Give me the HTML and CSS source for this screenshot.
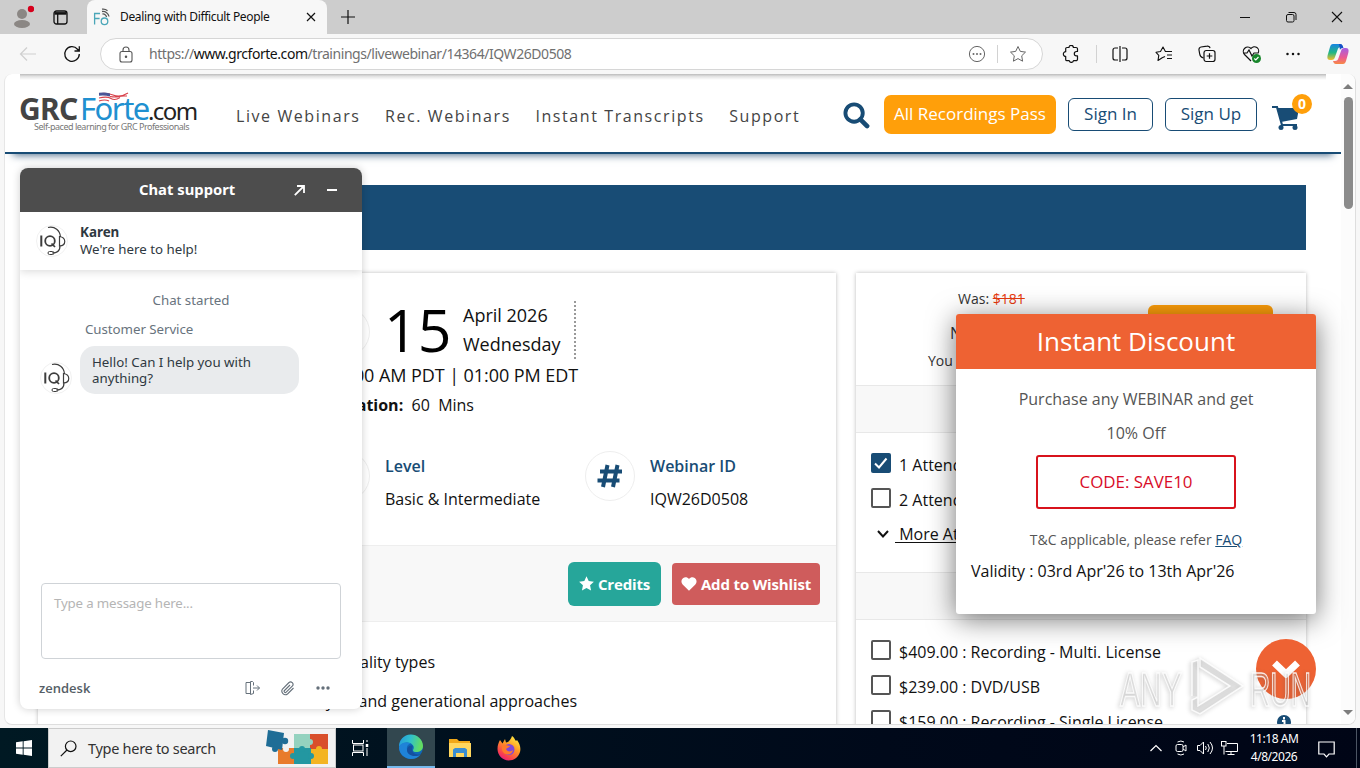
FILE: index.html
```html
<!DOCTYPE html>
<html lang="en">
<head>
<meta charset="utf-8">
<title>Dealing with Difficult People</title>
<link rel="stylesheet" href="styles.css">
</head>
<body>
<div class="desktop">
  <div class="titlebar">
    <svg class="profile" width="22" height="24" viewBox="0 0 22 24"><circle cx="10" cy="9" r="5" fill="#8b8784"/><ellipse cx="10" cy="19" rx="8" ry="4" fill="#8b8784"/><circle cx="19" cy="4" r="3.2" fill="#d6001c"/></svg>
    <svg class="tabs-menu" width="15" height="15" viewBox="0 0 15 15" fill="none" stroke="#111" stroke-width="1.3"><rect x="1" y="1" width="13" height="13" rx="2.5"/><path d="M1.5 3.4h12" stroke-width="2.6"/><path d="M4.7 4v10"/></svg>
    <div class="tab">
      <svg width="17" height="18" viewBox="0 0 17 18" fill="none" stroke="#4aa6b8" stroke-width="1.3"><path d="M1.6 16.500V5.500H7M1.600 10.500h5"/><circle cx="11.500" cy="13.300" r="3.300"/><path d="M9.500 6a3.500 3.500 0 0 1 4 3M9 3.500c3.500-.5 6.500 2 7 5M9 1.200c2-.3 4 .2 5.500 1.500" stroke="#555"/></svg>
      <span class="tab-title">Dealing with Difficult People</span>
      <svg class="tab-close" width="10" height="10" viewBox="0 0 10 10" stroke="#111" stroke-width="1.2"><path d="M1 1l8 8M9 1L1 9"/></svg>
    </div>
    <svg class="newtab" width="14" height="14" viewBox="0 0 14 14" stroke="#111" stroke-width="1.2"><path d="M7 0v14M0 7h14"/></svg>
    <div class="window-controls">
      <svg width="12" height="12" viewBox="0 0 12 12" stroke="#111"><path d="M1 6.500h10"/></svg>
      <svg width="12" height="12" viewBox="0 0 12 12" stroke="#111" fill="none"><rect x="1.500" y="3.500" width="7.500" height="7.500" rx="1.500"/><path d="M3.500 1.500H9A2 2 0 0 1 11 3.500V9"/></svg>
      <svg width="12" height="12" viewBox="0 0 12 12" stroke="#111" stroke-width="1.100"><path d="M1 1l10 10M11 1L1 11"/></svg>
    </div>
  </div>

  <div class="toolbar">
    <svg class="back" width="18" height="16" viewBox="0 0 18 16" fill="none" stroke="#cfcfcf" stroke-width="1.200"><path d="M17 8H2M8 1.500L1.500 8 8 14.500"/></svg>
    <svg class="reload" width="18" height="18" viewBox="0 0 18 18" fill="none" stroke="#111" stroke-width="1.300"><path d="M16.300 9A7.300 7.300 0 1 1 14.500 4.200L16 5.800M16.300 1.200V6H11.500"/></svg>
    <div class="address">
      <svg width="14" height="17" viewBox="0 0 14 17" fill="none" stroke="#555" stroke-width="1.100"><rect x="1" y="5.500" width="12" height="10.500" rx="2"/><path d="M4 5.500V4a3 3 0 0 1 6 0v1.500"/><circle cx="7" cy="10.800" r=".7" fill="#555"/></svg>
      <span class="url">https://<b>www.grcforte.com</b>/trainings/livewebinar/14364/IQW26D0508</span>
      <svg class="addr-more" width="18" height="18" viewBox="0 0 18 18" fill="none" stroke="#666"><circle cx="9" cy="9" r="7.600"/><g fill="#666" stroke="none"><circle cx="5.500" cy="9" r="1"/><circle cx="9" cy="9" r="1"/><circle cx="12.500" cy="9" r="1"/></g></svg>
      <i class="divider"></i>
      <svg width="18" height="18" viewBox="0 0 18 18" fill="none" stroke="#666" stroke-linejoin="round"><path d="M9 1.500l2.300 4.900 5.200.7-3.800 3.700.9 5.400L9 13.600l-4.600 2.600.9-5.400L1.500 7.100l5.200-.7z"/></svg>
    </div>
    <svg class="ext" width="18" height="18" viewBox="0 0 18 18" fill="none" stroke="#111" stroke-width="1.200" stroke-linejoin="round"><path d="M5 2.500h2a2.200 2.200 0 0 1 4.400 0H14a1.500 1.500 0 0 1 1.500 1.500V6.500h-1a2.100 2.100 0 0 0 0 4.400h1v3.300a1.500 1.500 0 0 1-1.500 1.500h-2.500a2.200 2.200 0 0 1-4.300 0H5a1.300 1.300 0 0 1-1.300-1.300v-3a2.200 2.200 0 0 1 0-4.700V3.800A1.300 1.300 0 0 1 5 2.500z"/></svg>
    <i class="divider tool-divider"></i>
    <div class="tools">
      <svg width="18" height="18" viewBox="0 0 18 18" fill="none" stroke="#111" stroke-width="1.200"><path d="M7 3H4a2 2 0 0 0-2 2v8a2 2 0 0 0 2 2h3M11 3h3a2 2 0 0 1 2 2v8a2 2 0 0 1-2 2h-3M9 1v16"/></svg>
      <svg width="18" height="18" viewBox="0 0 18 18" fill="none" stroke="#111" stroke-width="1.100" stroke-linejoin="round"><path d="M10 11.500l-2.800 1.300L3 15.500l.8-5.200L1 7.300l4.500-.8L8 2l2.400 4.500H17M12 10h5M12 13.500h5"/></svg>
      <svg width="18" height="18" viewBox="0 0 18 18" fill="none" stroke="#111" stroke-width="1.200"><path d="M5.500 13C3 12.500 2 11 1.700 9L1 5a2.500 2.500 0 0 1 2-3l6-.9a2.500 2.500 0 0 1 3 2"/><rect x="6" y="5.500" width="11" height="11" rx="2.200"/><path d="M11.500 8.200v5.600M8.700 11h5.600"/></svg>
      <svg class="health" width="20" height="19" viewBox="0 0 20 19" fill="none" stroke="#111" stroke-width="1.200"><path d="M9 16L2.500 9.500A4.200 4.200 0 0 1 9 3.500a4.200 4.200 0 0 1 6.800 5M1 8h4l2-3 3 6 2-3h4"/><circle cx="14.500" cy="13.500" r="4.500" fill="#18862b" stroke="none"/><path d="M12.300 13.500l1.500 1.500 2.700-3" stroke="#fff"/></svg>
      <svg width="16" height="16" viewBox="0 0 16 16" fill="#111"><circle cx="2.500" cy="8" r="1.250"/><circle cx="8" cy="8" r="1.250"/><circle cx="13.500" cy="8" r="1.250"/></svg>
      <svg width="22" height="22" viewBox="0 0 22 22"><defs><linearGradient id="cp1" x1="0" y1="0" x2="0" y2="1"><stop offset="0" stop-color="#1684e3"/><stop offset=".55" stop-color="#22b783"/><stop offset="1" stop-color="#f6bd29"/></linearGradient><linearGradient id="cp2" x1="0" y1="0" x2="0" y2="1"><stop offset="0" stop-color="#a45fe4"/><stop offset=".6" stop-color="#ec5b92"/><stop offset="1" stop-color="#f78944"/></linearGradient></defs><path d="M6 1h7c2 0 2.500 1.500 3 3h-2c-2 0-3 1-3.500 3L8 14c-.5 2-1.500 3-3.500 3H3C0 17 0 14 1 11l2-7c.6-2 1.500-3 3-3z" fill="url(#cp1)"/><path d="M16 21H9c-2 0-2.500-1.500-3-3h2c2 0 3-1 3.500-3L14 8c.5-2 1.500-3 3.500-3H19c3 0 3 3 2 6l-2 7c-.6 2-1.500 3-3 3z" fill="url(#cp2)"/><path d="M12 1h1c2 0 2.500 1.500 3.500 4-2 0-3 .5-3.500 2z" fill="#1750c7"/></svg>
    </div>
  </div>

  <div class="viewport">
    <div class="page">
      <header class="site-header">
        <div class="logo">
          <div class="logo-name"><span class="logo-grc">GRC</span><span class="logo-forte">Forte</span><span class="logo-com">.com</span></div>
          <div class="logo-tag">Self-paced learning for GRC Professionals</div>
          <svg class="flag" width="32" height="10" viewBox="0 0 32 10" fill="none"><path d="M1 2q7-2 14 1t15-2M12 4.500q6 1 9 0t8-.5M1 6q8-2 12 .5t9-1M1 9q6-2 10 0" stroke="#d8414a" stroke-width="1.100"/><path d="M1 .8q6-1 11 .8v3q-5-1.500-11-.8z" fill="#4a5596"/></svg>
        </div>
        <nav class="menu"><a>Live Webinars</a><a>Rec. Webinars</a><a>Instant Transcripts</a><a>Support</a></nav>
        <svg class="search" width="27" height="27" viewBox="0 0 28 28" fill="none" stroke="#184c75"><circle cx="11.500" cy="11.500" r="9" stroke-width="4"/><path d="M18 18l7 7" stroke-width="4.800" stroke-linecap="round"/></svg>
        <a class="pass">All Recordings Pass</a>
        <a class="sign sign-in">Sign In</a>
        <a class="sign sign-up">Sign Up</a>
        <div class="cart">
          <svg width="30" height="26" viewBox="0 0 30 26"><path d="M1 2h5l5 18h15" fill="none" stroke="#184c75" stroke-width="2.200"/><path d="M6 3h22l-2 11-16 3z" fill="#184c75"/><circle cx="10" cy="22.500" r="2.500" fill="#184c75"/><circle cx="24" cy="22.500" r="2.500" fill="#184c75"/></svg>
          <span class="cart-count">0</span>
        </div>
      </header>

      <div class="banner"></div>

      <div class="columns">
        <section class="card details">
          <div class="date-row">
            <span class="circle circle-date"></span>
            <span class="day">15</span>
            <div class="month"><div>April 2026</div><div>Wednesday</div></div>
          </div>
          <div class="time">10:00 AM PDT | 01:00 PM EDT</div>
          <div class="duration"><b>Duration:</b>&nbsp; 60&nbsp; Mins</div>
          <div class="facts">
            <div class="fact"><span class="circle"></span><div><div class="fact-name">Level</div><div>Basic &amp; Intermediate</div></div></div>
            <div class="fact"><span class="circle"><svg width="26" height="24" viewBox="0 0 26 24" fill="none" stroke="#184c75" stroke-width="4"><path d="M10.500 1L6 23M20.500 1L16 23M3 7.500h22M.5 16.500h22"/></svg></span><div><div class="fact-name">Webinar ID</div><div>IQW26D0508</div></div></div>
          </div>
          <div class="actions">
            <a class="btn credits"><svg width="15" height="15" viewBox="0 0 24 24" fill="#fff"><path d="M12 .5l3.500 7.600 8.300 1-6.100 5.700 1.600 8.200L12 19l-7.300 4 1.600-8.200L.2 9.100l8.300-1z"/></svg>Credits</a>
            <a class="btn wishlist"><svg width="16" height="14" viewBox="0 0 24 22" fill="#fff"><path d="M12 21.500L2 11.800C-1 8.500-.2 3.500 3 1.500 6.300-.5 10 .8 12 3c2-2.200 5.700-3.500 9-1.500 3.200 2 4 7 1 10.300z"/></svg>Add to Wishlist</a>
          </div>
          <div class="topics"><div class="topic-a">Personality types</div><div class="topic-b">Styles and generational approaches</div></div>
        </section>

        <section class="card prices">
          <div class="price-block">
            <div class="was">Was: <s>$181</s></div>
            <div class="now">Now:</div>
            <div class="save">You Save:</div>
            <span class="buy"></span>
          </div>
          <div class="strip"></div>
          <div class="options live">
            <div class="option"><span class="check checked"><svg width="20" height="20" viewBox="0 0 20 20" fill="none" stroke="#fff" stroke-width="2"><path d="M4 10.500l4 4L15.500 5.500"/></svg></span><span>1 Attendee</span></div>
            <div class="option"><span class="check"></span><span>2 Attendees</span></div>
            <div class="option more"><svg width="12" height="8" viewBox="0 0 12 8" fill="none" stroke="#111" stroke-width="2"><path d="M1 1l5 5.500L11 1"/></svg><u>&nbsp;More Attendees</u></div>
          </div>
          <div class="strip"></div>
          <div class="options recorded">
            <div class="option"><span class="check"></span><span>$409.00 : Recording - Multi. License</span></div>
            <div class="option"><span class="check"></span><span>$239.00 : DVD/USB</span></div>
            <div class="option"><span class="check"></span><span>$159.00 : Recording - Single License</span><svg class="info" width="14" height="14" viewBox="0 0 14 14"><circle cx="7" cy="7" r="7" fill="#184c75"/><path d="M7 2v2.500M5 6h2.500v5M5 11h4" stroke="#fff" stroke-width="2" fill="none"/></svg></div>
          </div>
        </section>
      </div>
    </div>
    <div class="scrollbar"><i class="arrow-up"></i><i class="thumb"></i><i class="arrow-down"></i></div>
  </div>

  <div class="taskbar">
    <div class="start"><svg width="16" height="16" viewBox="0 0 16 16" fill="#fff"><path d="M0 2.200L6.700 1.300V7.500H0zM7.600 1.200L16 0v7.500H7.600zM0 8.400h6.700v6.300L0 13.800zM7.600 8.400H16V16l-8.400-1.200z"/></svg></div>
    <div class="searchbox">
      <svg width="17" height="17" viewBox="0 0 17 17" fill="none" stroke="#111" stroke-width="1.200"><circle cx="10.700" cy="6.300" r="5.300"/><path d="M7 10L.8 16.200"/></svg>
      <span>Type here to search</span>
      <svg class="puzzle" width="64" height="36" viewBox="0 0 64 36"><path d="M28 4h16v16H28z" fill="#94d2bf"/><path d="M44 4h18v16H44z" fill="#d94f2b"/><path d="M12 18h16v16H12z" fill="#e87b2c"/><path d="M28 18h17v16H28z" fill="#2397a1"/><path d="M45 19h17v15H45z" fill="#f3b422"/><circle cx="44" cy="12" r="3" fill="#94d2bf"/><circle cx="36" cy="19" r="3" fill="#2397a1"/><circle cx="53" cy="19" r="3" fill="#f3b422"/><circle cx="27" cy="26" r="3" fill="#2397a1"/><circle cx="45" cy="26" r="3" fill="#2397a1"/><circle cx="20" cy="19" r="3" fill="#f2f2f2"/><path d="M2 0l16 3-2 17-16-4z" fill="#1f6d96"/><circle cx="19" cy="11" r="3.200" fill="#1f6d96"/><circle cx="9" cy="19" r="3" fill="#1f6d96"/></svg>
    </div>
    <div class="apps">
      <div class="app"><svg width="17" height="16" viewBox="0 0 17 16" fill="none" stroke="#fff"><path d="M.5 0v3.500h11V0M.5 16v-3.500h11V16M15 0v2M15 8v8"/><rect x="1.500" y="5" width="9.500" height="6"/><path d="M15 4v3" stroke-width="2.500"/></svg></div>
      <div class="app active"><svg width="26" height="26" viewBox="0 0 26 26"><defs><linearGradient id="ed" x1="0" y1="0" x2="1" y2=".2"><stop offset="0" stop-color="#2497dc"/><stop offset=".5" stop-color="#2fc0cd"/><stop offset="1" stop-color="#63dc61"/></linearGradient></defs><circle cx="13" cy="13" r="12" fill="#0f68b8"/><path d="M1 13a12 12 0 0 1 24-1c0 4-3 6-7 6-3 0-3.500-1.500-2.500-3C17 12 13 8 8.500 8.500 5 9 2 10.500 1 13z" fill="url(#ed)"/><path d="M9 16c-.5-4 1-6 4-6.500-5-2.500-11-.5-12 4C1 20 7 25 13 25c4 0 7-1.500 9-4-7 2-12-.5-13-5z" fill="#1f83d8"/><path d="M9 16c0 5 7 8 14 4.500-5 .5-8.500-1-9-5 0-2 1-2.500.5-4-3-.5-5.500 1.500-5.500 4.500z" fill="#1450a0"/></svg></div>
      <div class="app"><svg width="22" height="20" viewBox="0 0 22 20"><path d="M0 1h8l2 2h11v16H0z" fill="#f0a818"/><path d="M0 5h22v14H0z" fill="#ffd75e"/><path d="M4 19v-7.500l2-1.500h10l2 1.500V19h-3v-4H7v4z" fill="#3a8ed2"/></svg></div>
      <div class="app"><svg width="24" height="25" viewBox="0 0 24 25"><defs><linearGradient id="ff" x1=".8" y1="0" x2=".2" y2="1"><stop offset="0" stop-color="#fff044"/><stop offset=".4" stop-color="#ff9a24"/><stop offset=".8" stop-color="#f83c50"/><stop offset="1" stop-color="#e5178b"/></linearGradient></defs><path d="M3 4l2.500 3.500L8 3l1 3.500C12 6 14 3 15 0c2 1 3 4 4 5l1-1c3 4 4 8 3 12-1.500 5-6 8.500-11.500 8.500S.5 19.500.5 13C.5 9 1.500 7 3 4z" fill="url(#ff)"/><circle cx="12" cy="13.500" r="5.500" fill="#8048d8"/><path d="M5 9c4-1 6 1 8 1-1 2-3 1.500-4 3 1 3 5 3 7 1-1 6-9 6-11 0z" fill="#ff7b2a"/></svg></div>
    </div>
    <div class="tray">
      <svg class="caret" width="12" height="8" viewBox="0 0 12 8" fill="none" stroke="#fff" stroke-width="1.200"><path d="M.5 7L6 1.500 11.500 7"/></svg>
      <svg class="cam" width="12" height="16" viewBox="0 0 12 16" fill="none" stroke="#fff"><rect x="1" y="4.500" width="7" height="7" rx="1.500"/><path d="M8 7l3-2v6L8 9M2.500 2q3.500-2 6.500 0M2.500 14q3.500 2 6.500 0"/></svg>
      <svg class="vol" width="17" height="14" viewBox="0 0 17 14" fill="none" stroke="#fff"><path d="M.5 4.500H3L6.500 1v12L3 9.500H.5zM8.500 5q1.500 2 0 4M10.800 3q3 4 0 8M13 1q5 6 0 12"/></svg>
      <svg class="net" width="17" height="14" viewBox="0 0 17 14" fill="none" stroke="#fff"><path d="M6 2.500h10.500v8H4.500M10 10.500v3M6.500 13.500h7M3 5v8.500"/><rect x=".5" y=".5" width="4.500" height="4.500"/></svg>
      <div class="clock"><div>11:18 AM</div><div>4/8/2026</div></div>
      <svg class="notice" width="17" height="17" viewBox="0 0 17 17" fill="none" stroke="#fff" stroke-width="1.200"><path d="M.8 1h15.400v12H11l-2.500 2.800L6 13H.8z"/></svg>
      <i class="peek"></i>
    </div>
  </div>

  <aside class="chat">
    <div class="chat-head"><span>Chat support</span>
      <svg class="popout" width="11" height="11" viewBox="0 0 11 11" fill="none" stroke="#fff" stroke-width="1.800"><path d="M.8 10.200L10 1M3 1h7v7"/></svg>
      <svg class="minimize" width="12" height="4" viewBox="0 0 12 4" stroke="#fff" stroke-width="2"><path d="M1 2h10"/></svg>
    </div>
    <div class="agent">
      <svg class="avatar" width="34" height="34" viewBox="0 0 34 34"><use href="#iq"/></svg>
      <div><b>Karen</b><div>We're here to help!</div></div>
    </div>
    <div class="chat-body">
      <div class="started">Chat started</div>
      <div class="dept">Customer Service</div>
      <div class="message">
        <svg class="avatar" width="34" height="34" viewBox="0 0 34 34"><g id="iq"><circle cx="17" cy="17" r="15.500" fill="#fff" stroke="#f1f1f1"/><g fill="none" stroke="#3d3d3d"><path d="M6.300 11.500v11" stroke-width="2"/><circle cx="15" cy="17" r="4.800" stroke-width="1.800"/><path d="M16.500 19.500l3.500 3.500" stroke-width="1.700"/><path d="M13 3.500c7-1.500 12 3 12.500 9.500M25 21.500c0 6-3 7.500-8 7.500" stroke-width="1.200"/><path d="M24.500 12.500c7 1 7 9 0 9.500z" stroke-width="1.200"/><rect x="13" y="27.500" width="6" height="3" rx="1.500"/></g></g></svg>
        <div class="bubble">Hello! Can I help you with anything?</div>
      </div>
    </div>
    <div class="composer">Type a message here...</div>
    <div class="chat-foot">
      <span class="brand">zendesk</span>
      <svg class="leave" width="16" height="14" viewBox="0 0 16 14" fill="none" stroke="#65707a"><path d="M5 1.500l-4 0v11h4M5.500.5v13L8.500 12.500v-3M5.500.5h2l1 1v3M8 7h6.500M12 4.500L14.500 7 12 9.500"/></svg>
      <svg class="clip" width="15" height="15" viewBox="0 0 15 15" fill="none" stroke="#65707a" stroke-width="1.100"><path d="M10 4L4.500 9.500a1.200 1.200 0 0 0 1.700 1.700L12.500 5a2.500 2.500 0 0 0-3.500-3.500L2.500 8a3.600 3.600 0 0 0 5 5L13.500 7"/></svg>
      <svg class="dots" width="14" height="6" viewBox="0 0 14 6" fill="#65707a"><circle cx="2" cy="3" r="1.700"/><circle cx="7" cy="3" r="1.700"/><circle cx="12" cy="3" r="1.700"/></svg>
    </div>
  </aside>

  <div class="discount">
    <div class="discount-head">Instant Discount</div>
    <div class="offer">Purchase any WEBINAR and get<br>10% Off</div>
    <div class="code">CODE: SAVE10</div>
    <div class="terms">T&amp;C applicable, please refer <a>FAQ</a></div>
    <div class="validity">Validity : 03rd Apr'26 to 13th Apr'26</div>
  </div>

  <div class="scroll-down"><svg width="28" height="18" viewBox="0 0 28 18" fill="none" stroke="#fff" stroke-width="7"><path d="M2.500 3L14 14 25.500 3"/></svg></div>

  <svg class="watermark" width="200" height="72" viewBox="0 0 200 72">
    <text x="4" y="52" textLength="62" lengthAdjust="spacingAndGlyphs">ANY</text>
    <text x="134" y="52" textLength="61" lengthAdjust="spacingAndGlyphs">RUN</text>
    <path d="M76 42V8l6-2v36M84 4l43 28-43 28-8-4V46l6-3v9l32-20-30-19z"/>
  </svg>
</div>
</body>
</html>
```

FILE: styles.css
```css
* { box-sizing: border-box; }
body { margin: 0; font-family: "Open Sans", "Noto Sans", sans-serif; color: #111; }
svg { display: block; flex: none; }
.desktop { position: relative; width: 1360px; height: 768px; overflow: hidden; display: flex; flex-direction: column; background: #f7f7f7; }

/* Browser chrome */
.titlebar { height: 34px; flex: none; background: #cdcdcd; display: flex; align-items: center; }
.profile { margin: -1px 0 0 12px; }
.tabs-menu { margin-left: 19px; }
.tab { width: 240px; height: 34px; margin-left: 19px; padding: 0 11px 0 6px; background: #f7f7f7; border-radius: 8px 8px 0 0; display: flex; align-items: center; }
.tab-title { margin: -1px 0 0 10px; font: 12px "Noto Sans", sans-serif; letter-spacing: -.34px; white-space: nowrap; }
.tab-close { margin-left: auto; }
.newtab { margin-left: 14px; }
.window-controls { margin-left: auto; padding-right: 17px; display: flex; gap: 34px; }
.toolbar { height: 40px; flex: none; display: flex; align-items: center; background: #f7f7f7; }
.back { margin-left: 19px; }
.reload { margin-left: 26px; }
.address { width: 943px; height: 32px; margin-left: 19px; padding: 0 15px 0 18px; display: flex; align-items: center; background: #fff; border: 1px solid #d6d6d6; border-radius: 16px; }
.url { margin: -1px 0 0 16px; font: 14px "Noto Sans", sans-serif; color: #707070; white-space: nowrap; letter-spacing: -.45px; }
.url b { font-weight: 400; color: #111; }
.addr-more { margin-left: auto; }
.divider { width: 1px; height: 18px; margin: 0 11px; background: #d2d2d2; }
.ext { margin-left: 19px; }
.tool-divider { margin: 0 14px 0 16px; }
.tools { display: flex; align-items: center; justify-content: space-between; width: 238px; }
.health { margin-right: -2px; }

/* Page viewport */
.viewport { height: 651px; margin: 0 4px; display: flex; background: #fff; border: 1px solid #dedede; border-top: 0; border-left-color: #e6e6e6; border-radius: 8px; overflow: hidden; flex: none; }
.page { width: 1336px; }
.scrollbar { width: 14px; background: #fcfcfc; display: flex; flex-direction: column; align-items: center; padding: 10px 0 9px; }
.arrow-up { border: 5px solid transparent; border-top: 0; border-bottom-color: #7d7d7d; }
.thumb { width: 9px; height: 112px; margin-top: 8px; border-radius: 5px; background: #8b8b8b; }
.arrow-down { margin-top: auto; border: 5px solid transparent; border-bottom: 0; border-top-color: #7d7d7d; }
.site-header { height: 80px; display: flex; align-items: flex-start; border-bottom: 2px solid #184c75; padding-left: 15px; background: linear-gradient(#bbb, #e2e2e2 40%, transparent) 50% 0 / 1306px 6px no-repeat; box-shadow: 0 9px 8px -8px #4a6a88; }
.logo { position: relative; width: 178px; height: 62px; }
.logo-name { height: 40px; margin-top: 14px; display: flex; align-items: baseline; line-height: 40px; white-space: nowrap; }
.logo-grc { width: 61px; margin-left: -1px; font: 700 30px/40px "Noto Sans"; color: #444; letter-spacing: -.7px; }
.logo-forte { width: 68px; margin-left: 0; font: 31px/40px "Noto Sans"; color: #2090d0; letter-spacing: -1.500px; }
.logo-com { font: 24px/40px "Noto Sans"; letter-spacing: -1.600px; color: #222; }
.logo-tag { margin: -6px 0 0 14px; font: 9px/10px "Noto Sans"; letter-spacing: -.48px; color: #777; white-space: nowrap; }
.flag { position: absolute; left: 78px; top: 18px; }
.menu { display: flex; gap: 24.500px; margin: 29px 0 0 38px; width: 607px; font-size: 16px; line-height: 26px; color: #444; font-weight: 500; letter-spacing: 1.580px; white-space: nowrap; }
.search { margin: 28px 1px 0 0; }
.pass { width: 172px; height: 39px; margin: 21px 0 0 13px; border-radius: 7px; background: #ff9f0a; color: #fff; font-size: 17px; line-height: 38px; text-align: center; }
.sign { height: 33px; margin: 24px 0 0 12px; border: 1px solid #184c75; border-radius: 6px; color: #184c75; font-size: 17px; line-height: 30px; text-align: center; }
.sign-in { width: 85px; }
.sign-up { width: 92px; }
.cart { position: relative; margin: 31px 0 0 14px; }
.cart-count { position: absolute; left: 21px; top: -11px; width: 20px; height: 20px; border-radius: 10px; background: #ff9f0a; color: #fff; font: 700 14px/20px "Open Sans"; text-align: center; }
.banner { height: 65px; margin: 31px 35px 0 33px; background: #184c75; }
.columns { display: grid; grid-template-columns: 798px 450px; gap: 20px; margin: 23px 0 0 33px; }
.card { height: 520px; background: #fff; box-shadow: 0 0 4px #bbb; }
.date-row { height: 58px; margin-top: 28px; margin-left: 282px; width: 256px; display: flex; border-right: 2px dotted #999; }
.circle { width: 50px; height: 50px; flex: none; border: 1px solid #eee; border-radius: 50%; display: flex; align-items: center; justify-content: center; background: #fff; }
.circle-date { margin-top: 6px; }
.day { width: 78px; margin: -1px 0 0 14px; padding-right: 1px; font-size: 59px; line-height: 58px; color: #000; }
.month { margin-left: 1px; font-size: 18px; line-height: 29px; white-space: nowrap; }
.time { width: 540px; margin-top: 2px; font-size: 18px; line-height: 29px; text-align: right; letter-spacing: -.07px; }
.duration { width: 436px; font-size: 16px; line-height: 31px; text-align: right; }
.facts { display: flex; margin: 29px 0 0 282px; line-height: 33px; white-space: nowrap; }
.fact { display: flex; flex: none; gap: 15px; width: 265px; }
.fact .circle { margin-top: 1px; }
.fact-name { color: #184c75; font-weight: 600; }
.actions { height: 77px; margin-top: 29px; display: flex; align-items: center; justify-content: flex-end; gap: 11px; padding-right: 16px; background: #f8f8f8; border: solid #eee; border-width: 1px 0; }
.btn { display: flex; align-items: center; justify-content: center; gap: 4px; color: #fff; font-weight: 700; font-size: 15px; letter-spacing: -.15px; white-space: nowrap; }
.credits { width: 93px; height: 44px; border-radius: 6px; background: #26a69a; }
.wishlist { width: 148px; height: 42px; border-radius: 4px; background: #cf5c5c; }
.topics { padding-top: 21px; line-height: 39px; text-align: right; white-space: nowrap; }
.topic-a { width: 397px; }
.topic-b { width: 539px; }
.price-block { position: relative; height: 112px; padding-top: 12px; color: #333; font-size: 14px; line-height: 28px; }
.was { padding-left: 102px; }
.was s { color: #e8380d; }
.now { margin-top: 8px; padding-left: 94px; font-size: 16px; line-height: 24px; }
.save { margin-top: 2px; padding-left: 72px; }
.buy { position: absolute; left: 292px; top: 32px; width: 125px; height: 40px; border-radius: 6px; background: #ff9f0a; }
.strip { height: 48px; background: #f8f8f8; border: solid #e8e8e8; border-width: 1px 0; }
.options { padding-left: 15px; white-space: nowrap; }
.live { height: 139px; padding-top: 12px; }
.recorded { padding-top: 12px; }
.option { height: 35px; display: flex; align-items: center; gap: 8px; }
.option > span:nth-child(2) { padding-top: 5px; }
.check { width: 20px; height: 20px; border: 2px solid #555; border-radius: 2px; }
.checked { border: 0; background: #184c75; }
.more { padding-left: 6px; gap: 6px; }
.more svg { margin-top: 3px; }
.more u { padding-top: 2px; text-underline-offset: 2px; }
.info { margin-left: auto; margin-right: 15px; margin-top: 4px; }

/* Taskbar */
.taskbar { height: 40px; margin-top: auto; flex: none; display: flex; color: #fff; background: linear-gradient(90deg, #001923, #00091a 65%, #000516); }
.start { width: 48px; display: grid; place-items: center; }
.searchbox { width: 288px; background: #f2f2f2; border: 1px solid #ccc; display: flex; align-items: center; padding-left: 11px; color: #333; }
.searchbox span { margin-left: 11px; width: 167px; font: 14.500px "Noto Sans", sans-serif; letter-spacing: -.29px; white-space: nowrap; }
.puzzle { margin-left: 11px; }
.apps { display: flex; }
.app { width: 48px; display: grid; place-items: center; }
.app + .app { margin-left: 1px; }
.app.active { margin-left: 3px; background: #32474f; border-bottom: 2px solid #76b9ed; }
.tray { margin-left: auto; display: flex; align-items: center; padding-right: 3px; }
.cam { margin-left: 13px; }
.vol { margin-left: 10px; }
.net { margin-left: 7px; }
.clock { width: 50px; margin: 0 19px 0 11px; font: 12px/18px "Noto Sans", sans-serif; letter-spacing: -.45px; text-align: center; white-space: nowrap; }
.notice { margin-top: 2px; }
.peek { width: 1px; height: 40px; margin-left: 21px; background: #4c5563; }

/* Chat widget */
.chat { position: absolute; left: 20px; top: 168px; width: 342px; height: 541px; display: flex; flex-direction: column; background: #fff; border-radius: 8px; overflow: hidden; box-shadow: 0 0 8px rgba(0,0,0,.2); font: 13.300px/17px "Noto Sans", sans-serif; color: #2f3941; }
.chat-head { position: relative; z-index: 1; height: 44px; flex: none; display: flex; align-items: center; background: #4d4d4d; color: #fff; font-weight: 700; font-size: 14.800px; padding-left: 119px; }
.chat-head span { width: 155px; margin-top: -2px; }
.minimize { margin-left: 21px; }
.agent { position: relative; height: 58px; flex: none; display: flex; gap: 11px; padding: 12px 0 0 15px; box-shadow: 0 2px 8px #ddd; }
.agent b { display: block; height: 17px; font-size: 13.400px; }
.chat-body { height: 313px; flex: none; }
.started { margin-top: 22px; text-align: center; color: #68737d; }
.dept { margin: 12px 0 0 65px; color: #68737d; letter-spacing: -.05px; }
.message { display: flex; gap: 7px; margin: 8px 0 0 19px; }
.message .avatar { margin-top: 15px; }
.bubble { width: 219px; height: 48px; padding: 8px 12px; line-height: 16px; border-radius: 15px; background: #e9ebed; }
.composer { width: 300px; height: 76px; flex: none; margin: 0 0 0 21px; padding: 11px 12px; border: 1px solid #cfd3d7; border-radius: 4px; color: #b5b5b5; letter-spacing: -.16px; }
.chat-foot { display: flex; align-items: center; height: 58px; flex: none; padding-left: 19px; color: #555e66; }
.brand { width: 206px; font: 600 13px "Open Sans"; }
.clip { margin-left: 19px; }
.dots { margin-left: 21px; }

/* Discount popup */
.discount { position: absolute; left: 956px; top: 314px; width: 360px; height: 300px; background: #fff; border-radius: 3px; box-shadow: 0 5px 28px rgba(0,0,0,.55); color: #555; text-align: center; }
.discount-head { height: 55px; border-radius: 3px 3px 0 0; background: #ee6233; color: #fff; font-size: 26px; line-height: 54px; }
.offer { margin-top: 13px; font-size: 16px; line-height: 34px; }
.code { width: 200px; height: 54px; margin: 5px auto 0; border: 2px solid #d8131c; border-radius: 3px; color: #d80c28; font-size: 16.900px; line-height: 50px; }
.terms { margin-top: 17px; font-size: 14px; line-height: 28px; }
.terms a { color: #184c75; text-decoration: underline; }
.validity { padding-left: 15px; line-height: 34px; text-align: left; color: #111; }
.scroll-down { position: absolute; left: 1256px; top: 639px; width: 60px; height: 60px; border-radius: 50%; background: #ee6233; display: grid; place-items: center; }
.watermark { position: absolute; left: 1116px; top: 654px; font: 48px "Liberation Sans", sans-serif; fill: rgba(190,190,190,.25); stroke: rgba(255,255,255,.85); stroke-width: 1.500; filter: drop-shadow(-1px 1px 2px rgba(90,90,90,.45)); }
```
